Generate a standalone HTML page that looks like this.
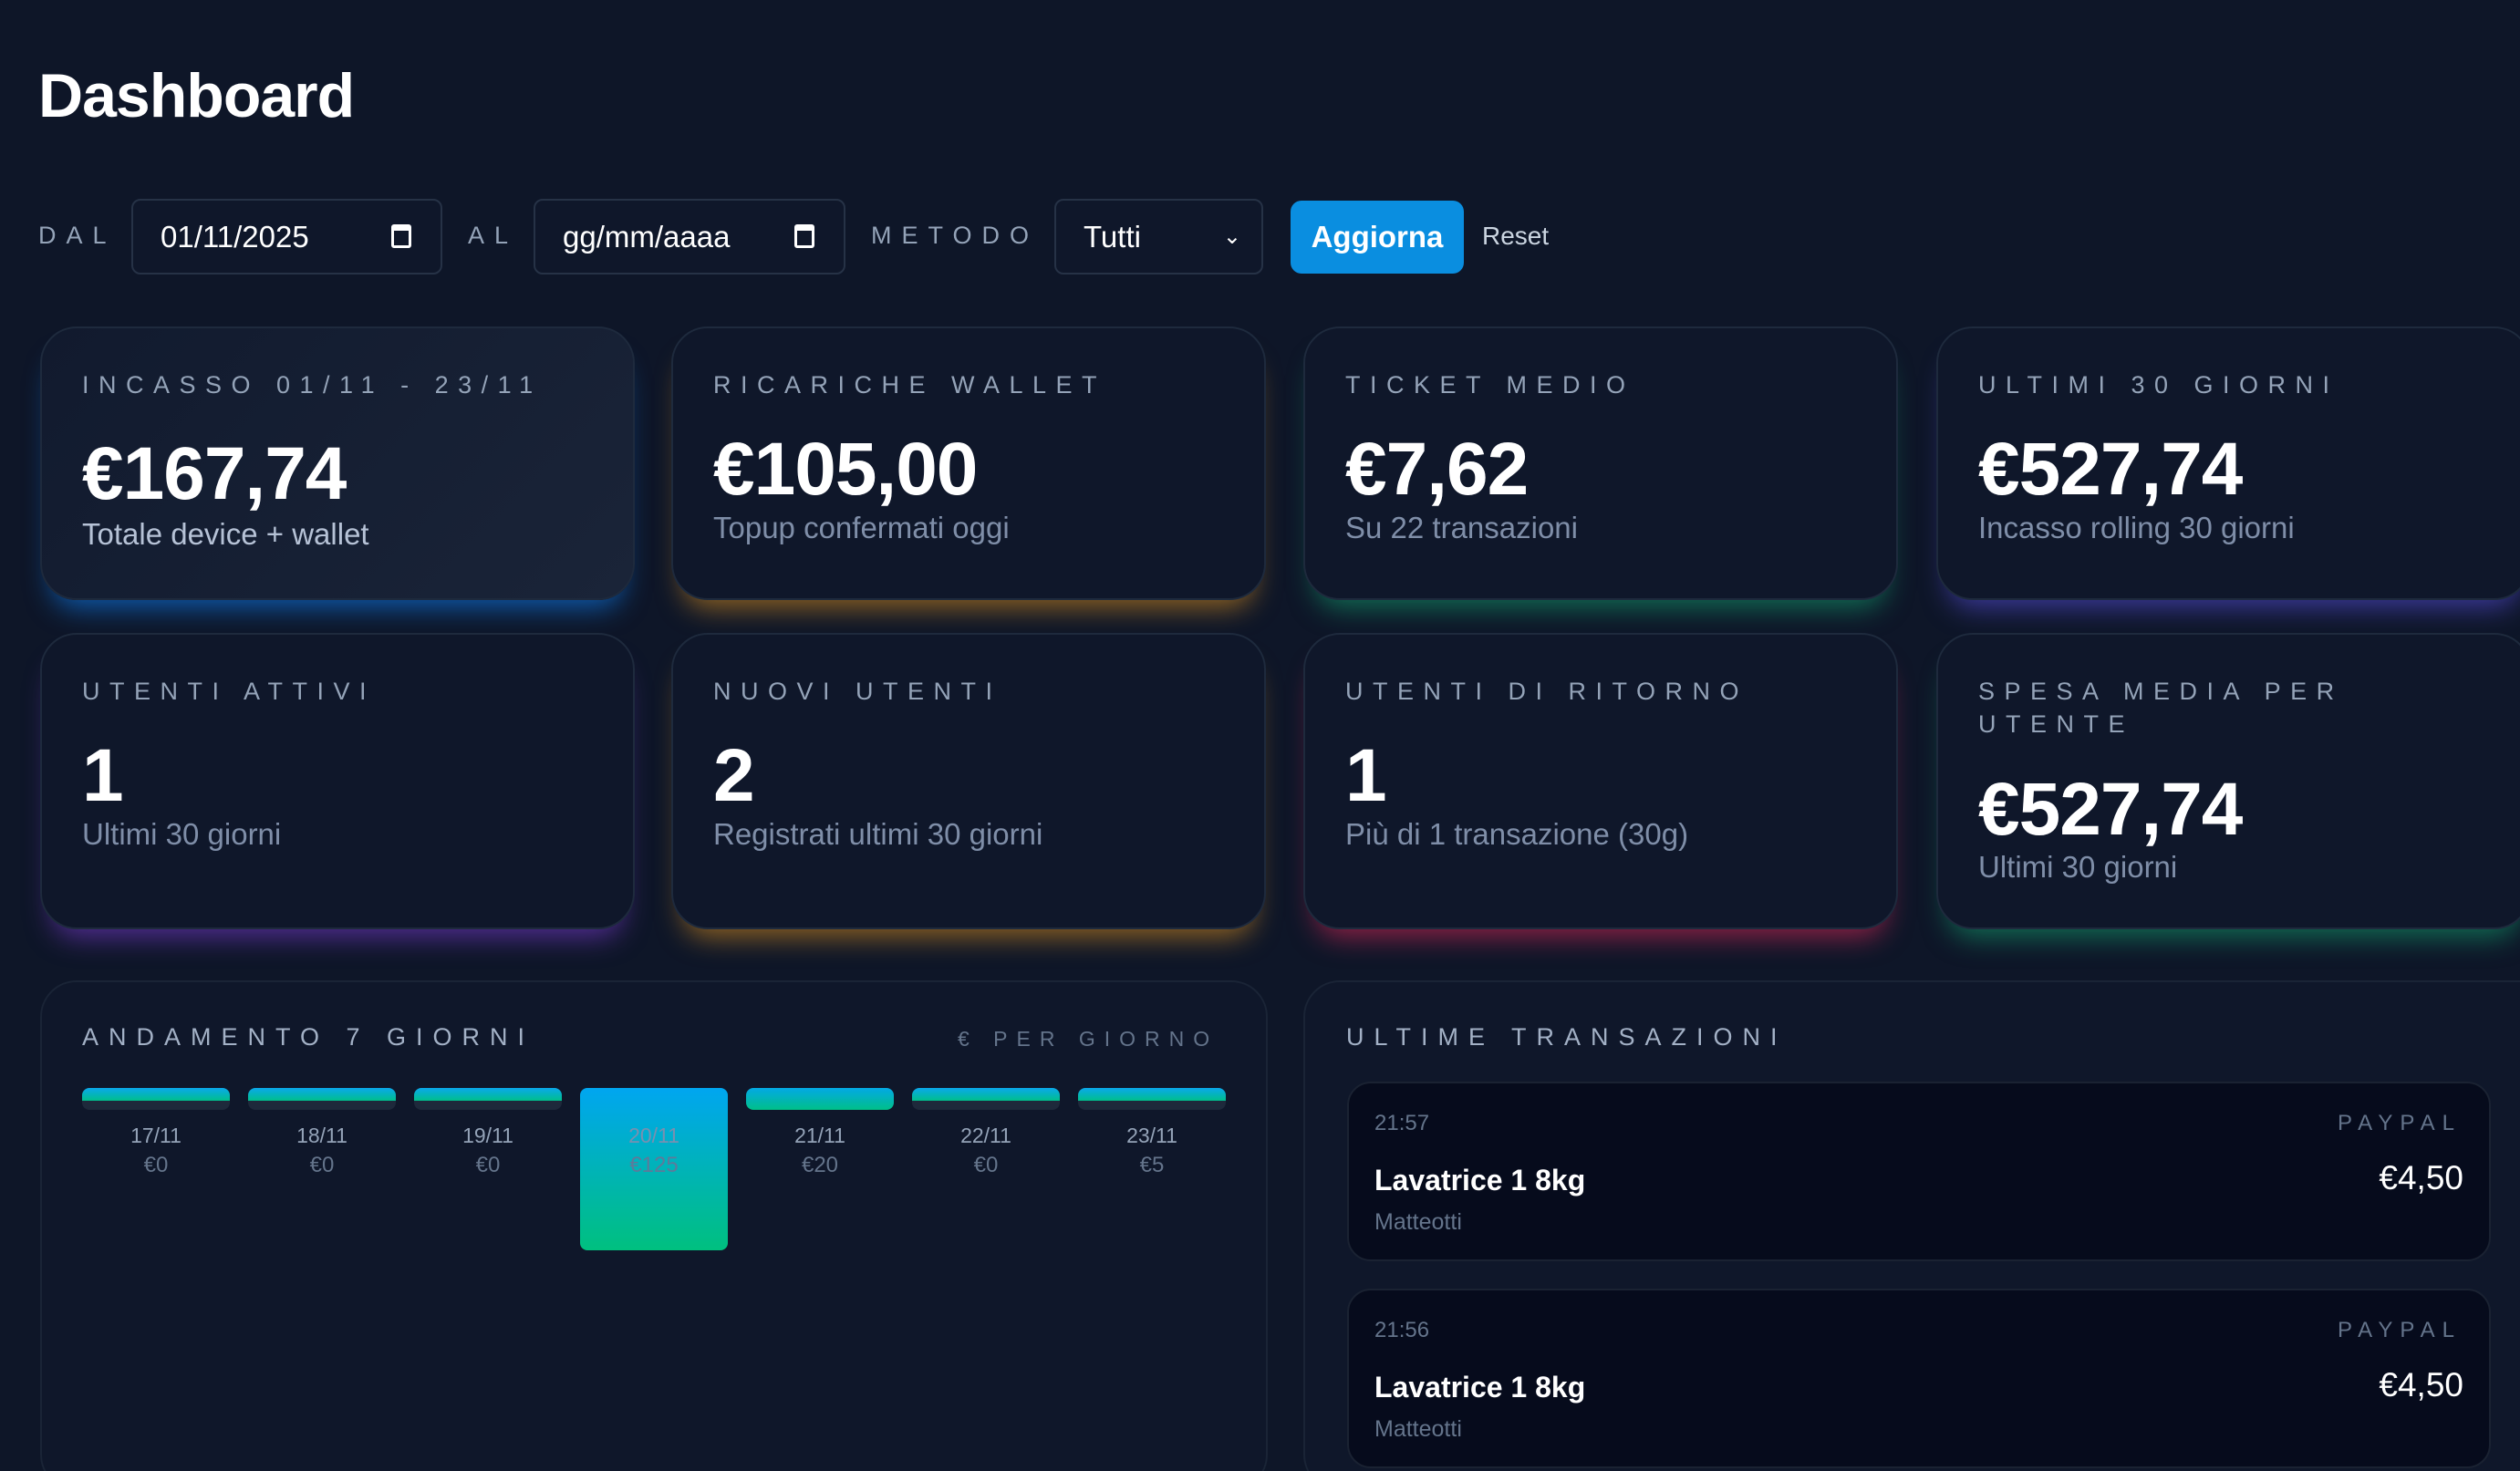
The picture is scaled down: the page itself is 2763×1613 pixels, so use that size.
<!DOCTYPE html>
<html style="width:2763px;height:1613px;overflow:hidden"><head><meta charset="utf-8"><style>
*{box-sizing:border-box;margin:0;padding:0}
body{width:2763px;height:1613px;overflow:hidden;background:#0e1628;font-family:"Liberation Sans",sans-serif;color:#fff;position:relative}
.a{position:absolute}
h1{position:absolute;left:42px;top:66px;font-size:68px;font-weight:700;letter-spacing:-1px}
.lbl{position:absolute;font-size:27px;letter-spacing:11px;color:#94a3b8;top:243px}
.inp{position:absolute;top:218px;height:83px;border:2px solid #263246;border-radius:10px;background:#0f172a;font-size:33px;color:#fff;padding:0 30px;line-height:79px}
.cal{position:absolute;right:32px;top:26px;width:22px;height:26px;border:3px solid #fff;border-top-width:7px;border-radius:3px}
.btn{position:absolute;left:1415px;top:220px;width:190px;height:80px;background:#0a8ee0;border-radius:12px;font-size:33px;font-weight:700;text-align:center;line-height:80px}
.card{position:absolute;width:652px;border-radius:40px;background:#0f172a;border:2px solid #1e2a3d}
.card .t{position:absolute;left:44px;top:44px;font-size:27px;letter-spacing:10.5px;color:#94a3b8;line-height:36px;width:560px}
.card .v{position:absolute;left:44px;top:113px;font-size:82px;font-weight:700;letter-spacing:-1px}
.card .s{position:absolute;left:44px;top:205px;font-size:33px;color:#7f8ea8}
.r1{top:358px;height:300px}.r2{top:694px;height:325px}
.panel{position:absolute;top:1075px;height:560px;border-radius:40px;background:#0f172a;border:2px solid #1a2436}
.bar{position:absolute;top:1193px;width:162px;height:24px;border-radius:8px;background:#1e293b;overflow:hidden}
.bar i{display:block;height:14px;background:linear-gradient(#0aa8ec,#00bf8a)}
.dl{position:absolute;width:162px;text-align:center;font-size:23px;color:#94a3b8;top:1232px}
.dv{position:absolute;width:162px;text-align:center;font-size:24px;color:#64748b;top:1264px}
.tx{position:absolute;left:1477px;width:1254px;height:197px;border-radius:26px;background:#060b1c;border:2px solid #1a2232}
.tx .tm{position:absolute;left:28px;top:30px;font-size:24px;color:#64748b}
.tx .pm{position:absolute;right:30px;top:30px;font-size:24px;color:#64748b;letter-spacing:8px}
.tx .n{position:absolute;left:28px;top:88px;font-size:32px;font-weight:700}
.tx .am{position:absolute;right:28px;top:83px;font-size:37px}
.tx .lo{position:absolute;left:28px;top:138px;font-size:25px;color:#64748b}
</style></head><body>
<h1>Dashboard</h1>
<div class="lbl" style="left:42px">DAL</div>
<div class="inp" style="left:144px;width:341px">01/11/2025<span class="cal"></span></div>
<div class="lbl" style="left:513px">AL</div>
<div class="inp" style="left:585px;width:342px">gg/mm/aaaa<span class="cal"></span></div>
<div class="lbl" style="left:955px">METODO</div>
<div class="inp" style="left:1156px;width:229px">Tutti<span class="a" style="right:22px;top:0;font-size:24px">&#8964;</span></div>
<div class="btn">Aggiorna</div>
<div class="a" style="left:1625px;top:243px;font-size:28px;color:#cbd5e1">Reset</div>

<div class="card r1" style="left:44px;background:linear-gradient(135deg,#111a2e,#1a2438);box-shadow:0 22px 30px -14px rgba(14,120,230,.7)"><div class="t">INCASSO 01/11 - 23/11</div><div class="v">€167,74</div><div class="s" style="color:#b6c2d6;top:207px">Totale device + wallet</div></div>
<div class="card r1" style="left:736px;box-shadow:0 22px 30px -14px rgba(230,150,30,.6)"><div class="t">RICARICHE WALLET</div><div class="v" style="top:108px">€105,00</div><div class="s" style="top:200px">Topup confermati oggi</div></div>
<div class="card r1" style="left:1429px;box-shadow:0 22px 30px -14px rgba(20,180,120,.55)"><div class="t">TICKET MEDIO</div><div class="v" style="top:108px">€7,62</div><div class="s" style="top:200px">Su 22 transazioni</div></div>
<div class="card r1" style="left:2123px;box-shadow:0 22px 30px -14px rgba(90,80,230,.6)"><div class="t">ULTIMI 30 GIORNI</div><div class="v" style="top:108px">€527,74</div><div class="s" style="top:200px">Incasso rolling 30 giorni</div></div>

<div class="card r2" style="left:44px;box-shadow:0 22px 30px -14px rgba(130,60,220,.6)"><div class="t">UTENTI ATTIVI</div><div class="v" style="top:108px">1</div><div class="s" style="top:200px">Ultimi 30 giorni</div></div>
<div class="card r2" style="left:736px;box-shadow:0 22px 30px -14px rgba(230,150,30,.6)"><div class="t">NUOVI UTENTI</div><div class="v" style="top:108px">2</div><div class="s" style="top:200px">Registrati ultimi 30 giorni</div></div>
<div class="card r2" style="left:1429px;box-shadow:0 22px 30px -14px rgba(230,40,90,.6)"><div class="t">UTENTI DI RITORNO</div><div class="v" style="top:108px">1</div><div class="s" style="top:200px">Più di 1 transazione (30g)</div></div>
<div class="card r2" style="left:2123px;box-shadow:0 22px 30px -14px rgba(20,180,120,.55)"><div class="t">SPESA MEDIA PER UTENTE</div><div class="v" style="top:145px">€527,74</div><div class="s" style="top:236px">Ultimi 30 giorni</div></div>

<div class="panel" style="left:44px;width:1346px"></div>
<div class="panel" style="left:1429px;width:1400px"></div>
<div class="a" style="left:90px;top:1122px;font-size:27px;letter-spacing:11px;color:#a3b1c6">ANDAMENTO 7 GIORNI</div>
<div class="a" style="left:1050px;top:1126px;font-size:23px;letter-spacing:10px;color:#64748b">€ PER GIORNO</div>
<div class="bar" style="left:90px"><i></i></div>
<div class="bar" style="left:272px"><i></i></div>
<div class="bar" style="left:454px"><i></i></div>
<div class="bar" style="left:636px;height:178px;background:linear-gradient(#00a6f0,#00c07f)"></div>
<div class="bar" style="left:818px;background:linear-gradient(#03a9e6,#00bf88)"></div>
<div class="bar" style="left:1000px"><i></i></div>
<div class="bar" style="left:1182px"><i></i></div>
<div class="dl" style="left:90px">17/11</div><div class="dv" style="left:90px">€0</div>
<div class="dl" style="left:272px">18/11</div><div class="dv" style="left:272px">€0</div>
<div class="dl" style="left:454px">19/11</div><div class="dv" style="left:454px">€0</div>
<div class="dl" style="left:636px;color:#7890b0">20/11</div><div class="dv" style="left:636px;color:#5d7a9a">€125</div>
<div class="dl" style="left:818px">21/11</div><div class="dv" style="left:818px">€20</div>
<div class="dl" style="left:1000px">22/11</div><div class="dv" style="left:1000px">€0</div>
<div class="dl" style="left:1182px">23/11</div><div class="dv" style="left:1182px">€5</div>

<div class="a" style="left:1476px;top:1122px;font-size:27px;letter-spacing:11px;color:#a3b1c6">ULTIME TRANSAZIONI</div>
<div class="tx" style="top:1186px"><div class="tm">21:57</div><div class="pm">PAYPAL</div><div class="n">Lavatrice 1 8kg</div><div class="am">€4,50</div><div class="lo">Matteotti</div></div>
<div class="tx" style="top:1413px"><div class="tm">21:56</div><div class="pm">PAYPAL</div><div class="n">Lavatrice 1 8kg</div><div class="am">€4,50</div><div class="lo">Matteotti</div></div>
</body></html>
